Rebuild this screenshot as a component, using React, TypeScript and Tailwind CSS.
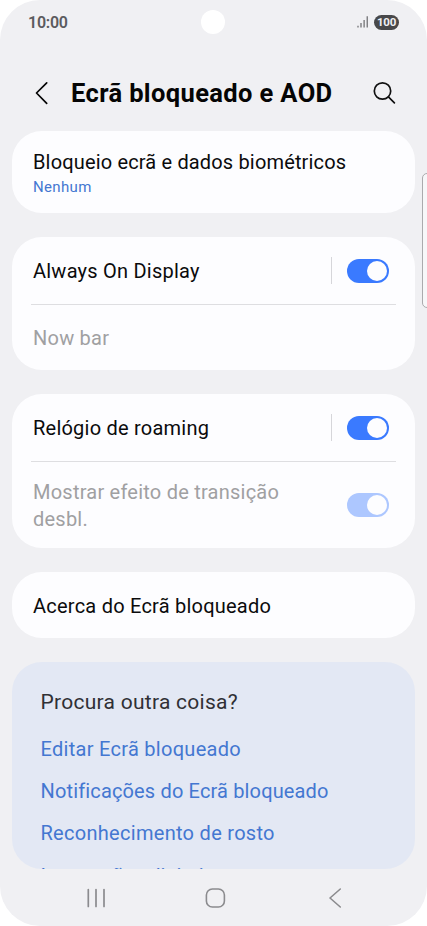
import type { ReactNode } from 'react';
import clsx from 'clsx';

function StatusBar() {
  return (
    <div className="grid h-11 shrink-0 grid-cols-3 items-center pl-[28px] pr-[28px] text-[#5b5b5e]">
      <span className="pt-px text-[16px] leading-none font-semibold tracking-[-0.25px]">10:00</span>
      <span className="h-6 w-6 justify-self-center rounded-full bg-white" />
      <span className="flex items-center gap-[6px] justify-self-end">
        <svg width="11" height="12" viewBox="0 0 11 12" fill="none" stroke="currentColor" strokeWidth="1.1">
          <path d="M1 9.8v1.6M4 7v4.4M7.1 4v7.4M10.2 0.3v11.1" />
        </svg>
        <span className="flex h-[15px] w-[25px] items-center justify-center rounded-full bg-[#48484a] pt-px text-[11.5px] leading-none font-bold tracking-[-0.2px] text-[#f0f0f3]">
          100
        </span>
      </span>
    </div>
  );
}

function Header() {
  return (
    <header className="flex h-[87px] shrink-0 items-center pt-[11px] pr-[31px] pl-[34px]">
      <button type="button" aria-label="Voltar" className="w-[37px]">
        <svg width="14" height="24" viewBox="0 0 14 24" fill="none" stroke="#050505" strokeWidth="1.7" strokeLinecap="round" strokeLinejoin="round">
          <path d="M12.7 1.8L2.5 12l10.2 10.4" />
        </svg>
      </button>
      <h1 className="flex-1 pt-[2px] text-[25.5px] leading-none font-bold tracking-[0.37px] whitespace-nowrap text-[#050505]">
        Ecrã bloqueado e AOD
      </h1>
      <button type="button" aria-label="Procurar">
        <svg width="24" height="24" viewBox="0 0 24 24" fill="none" stroke="#111" strokeWidth="1.7" strokeLinecap="round">
          <circle cx="10.5" cy="10" r="8.2" />
          <path d="M16.4 15.9l6 6" />
        </svg>
      </button>
    </header>
  );
}

function Card({ children, className }: { children: ReactNode; className?: string }) {
  return (
    <section className={clsx('shrink-0 rounded-[30px] bg-[#fdfdff] pr-[21px] pl-[21px]', className)}>
      {children}
    </section>
  );
}

function Toggle({ disabled = false }: { disabled?: boolean }) {
  return (
    <button
      type="button"
      role="switch"
      aria-checked="true"
      disabled={disabled}
      className={clsx(
        'flex h-6 w-[42px] shrink-0 items-center justify-end rounded-full pr-[2px]',
        disabled ? 'bg-[#adc7ff]' : 'bg-[#3a7aff]',
      )}
    >
      <span className="h-5 w-5 rounded-full bg-[#fdfdff]" />
    </button>
  );
}

function SplitToggle() {
  return (
    <div className="flex items-center gap-[15px]">
      <span className="h-[27px] w-px bg-[#d6d6da]" />
      <Toggle />
    </div>
  );
}

function Divider() {
  return <div className="mr-[-2px] ml-[-2px] h-px bg-[#dedee1]" />;
}

const links = [
  { label: 'Editar Ecrã bloqueado', className: 'tracking-[0.29px]' },
  { label: 'Notificações do Ecrã bloqueado', className: 'tracking-[0.15px]' },
  { label: 'Reconhecimento de rosto', className: 'tracking-[0.29px]' },
  { label: 'Impressões digitais', className: 'pt-px tracking-[-0.05px]' },
];

export default function App() {
  return (
    <div className="h-[926px] w-[427px] overflow-hidden bg-white font-[Roboto,'Liberation_Sans',sans-serif]">
      <div className="relative flex h-full flex-col overflow-hidden rounded-[40px] bg-[#f0f0f3]">
        <StatusBar />
        <Header />

        <main className="flex h-[738px] shrink-0 flex-col gap-6 overflow-hidden rounded-b-[30px] pr-3 pl-3 text-[20px] leading-[27px] tracking-[0.23px] text-[#0b0b0c]">
          <Card className="h-[82px] pt-[18px]">
            <p className="tracking-[0.16px] whitespace-nowrap">Bloqueio ecrã e dados biométricos</p>
            <p className="pt-px text-[15px] leading-[21px] tracking-[0.35px] text-[#4477d1]">Nenhum</p>
          </Card>

          <Card className="h-[133px]">
            <div className="flex h-[67px] items-center justify-between pr-[5px]">
              <span className="pt-[2px]">Always On Display</span>
              <SplitToggle />
            </div>
            <Divider />
            <div className="flex h-[65px] items-center pt-[2px] text-[#a0a0a2]">Now bar</div>
          </Card>

          <Card className="h-[154px]">
            <div className="flex h-[67px] items-center justify-between pr-[5px]">
              <span className="pt-[2px]">Relógio de roaming</span>
              <SplitToggle />
            </div>
            <Divider />
            <div className="flex h-[86px] items-center justify-between pr-[5px] text-[#a0a0a2]">
              <span className="w-[260px] pt-[2px]">Mostrar efeito de transição desbl.</span>
              <Toggle disabled />
            </div>
          </Card>

          <Card className="flex h-[66px] items-center pt-[2px]">Acerca do Ecrã bloqueado</Card>

          <section className="h-[207px] shrink-0 overflow-hidden rounded-[30px] bg-[#e3e8f4] pt-[27px] pr-[28px] pl-[28.5px]">
            <h2 className="text-[21px] leading-[27px] tracking-[0.27px] text-[#303035]">Procura outra coisa?</h2>
            <ul className="mt-[20px] flex flex-col gap-[15px] text-[#4477d1]">
              {links.map((link) => (
                <li key={link.label} className={clsx('whitespace-nowrap', link.className)}>
                  {link.label}
                </li>
              ))}
            </ul>
          </section>
        </main>

        <nav className="flex h-[57px] shrink-0 items-center pl-[86px] text-[#8b8b8e]">
          <svg width="20" height="20" viewBox="0 0 20 20" fill="none" stroke="currentColor" strokeWidth="1.7" strokeLinecap="round">
            <path d="M2.3 1.5v17M10 1.5v17M18 1.5v17" />
          </svg>
          <svg className="ml-[99px]" width="21" height="20" viewBox="0 0 21 20" fill="none" stroke="currentColor" strokeWidth="1.6">
            <rect x="1.4" y="1" width="18" height="18" rx="6" />
          </svg>
          <svg className="ml-[103px]" width="13" height="20" viewBox="0 0 13 20" fill="none" stroke="currentColor" strokeWidth="1.6" strokeLinecap="round" strokeLinejoin="round">
            <path d="M11.3 1L1 10l10.3 9" />
          </svg>
        </nav>

        {/* edge panel handle */}
        <div className="absolute top-[173px] right-[-5px] h-[135px] w-[10px] rounded-[5px] border border-[#aaaaad] bg-[#f7f7f9]" />
      </div>
    </div>
  );
}
